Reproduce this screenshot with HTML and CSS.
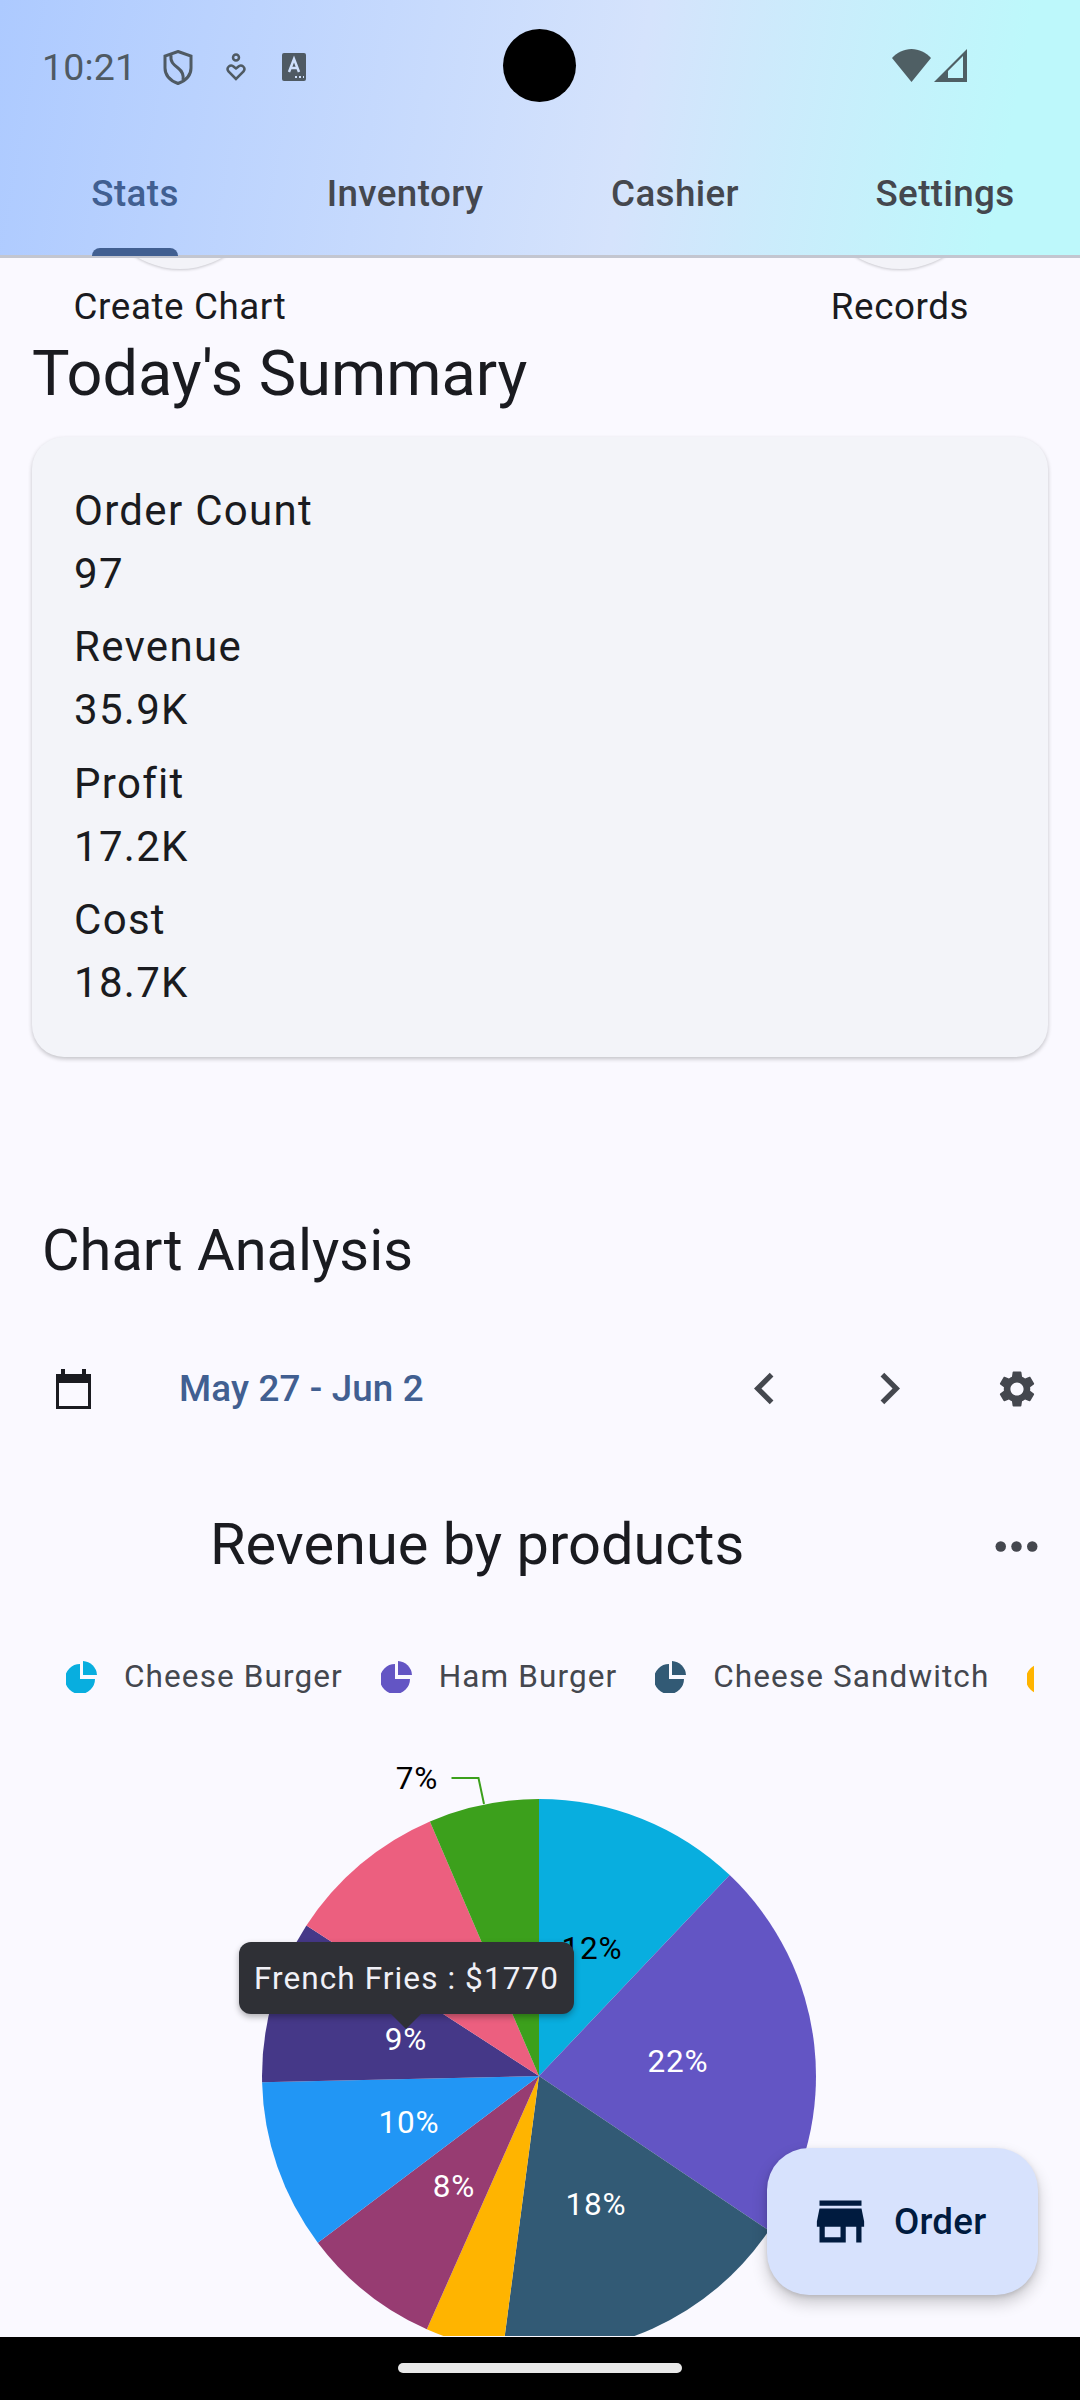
FILE: index.html
```html
<!DOCTYPE html>
<html lang="en">
<head>
  <meta charset="UTF-8">
  <meta name="viewport" content="width=device-width, initial-scale=1.0">
  <title>Stats</title>
  <link rel="stylesheet" href="styles.css">
</head>
<body>
  <header class="appbar">
    <div class="statusbar">
      <div class="status-left">
        <span class="clock">10:21</span>
        <svg class="ic-shield" viewBox="0 0 30 35"><path d="M15 1.500 28 6v12c0 7-5 12.500-13 15.500C7 30.500 2 25 2 18V6z" fill="none" stroke="#4f5a63" stroke-width="3"/><path d="M8 5c-1 7 3 10 7 13s6 6 5 12" fill="none" stroke="#4f5a63" stroke-width="3"/></svg>
        <svg class="ic-care" viewBox="0 0 20 28"><circle cx="10" cy="4.500" r="3" fill="none" stroke="#4f5a63" stroke-width="2.500"/><path d="M10 26 2.500 18.500c-3-4 2.500-8 5-5L10 15.500l2.500-2c2.500-3 8 1 5 5z" fill="none" stroke="#4f5a63" stroke-width="2.500"/></svg>
        <svg class="ic-a" viewBox="0 0 24 28"><rect width="24" height="28" rx="2" fill="#4f5a63"/><path d="M7 19 12 6l5 13M8.500 15h7" fill="none" stroke="#cfe0fc" stroke-width="2.500"/><path d="M13 24h2M17 24h2M21 24h1" stroke="#cfe0fc" stroke-width="2"/></svg>
      </div>
      <div class="camera"></div>
      <div class="status-right">
        <svg class="ic-wifi" viewBox="0 0 39 33"><path d="M19.500 33 0 9C5 3.500 12 0 19.500 0S34 3.500 39 9z" fill="#4f5f64"/></svg>
        <svg class="ic-signal" viewBox="0 0 33 33"><path d="M33 0V33H0zM14 29H29V7L14 22z" fill="#4f5f64" fill-rule="evenodd"/></svg>
      </div>
    </div>
    <nav class="tabs">
      <a class="tab active">Stats</a>
      <a class="tab">Inventory</a>
      <a class="tab">Cashier</a>
      <a class="tab">Settings</a>
    </nav>
  </header>

  <main class="content">
    <div class="shortcuts">
      <div class="shortcut"><div class="shortcut-btn"></div><span>Create Chart</span></div>
      <div class="shortcut"><div class="shortcut-btn"></div><span>Records</span></div>
    </div>

    <h2 class="section-title summary-title">Today's Summary</h2>
    <section class="summary-card">
      <div class="stat"><div>Order Count</div><div>97</div></div>
      <div class="stat"><div>Revenue</div><div>35.9K</div></div>
      <div class="stat"><div>Profit</div><div>17.2K</div></div>
      <div class="stat"><div>Cost</div><div>18.7K</div></div>
    </section>

    <h2 class="section-title analysis-title">Chart Analysis</h2>
    <div class="toolbar">
      <svg class="ic-calendar" viewBox="0 0 35 40"><path fill-rule="evenodd" d="M5 0h4v5h17V0h4v5h5v35H0V5h5zM3 14v23h29V14z" fill="#1a1b20"/></svg>
      <span class="range">May 27 - Jun 2</span>
      <svg class="ic-btn prev" viewBox="0 0 24 24"><path d="M15.410 7.410 14 6l-6 6 6 6 1.410-1.410L10.830 12z"/></svg>
      <svg class="ic-btn next" viewBox="0 0 24 24"><path d="M10 6 8.590 7.410 13.170 12l-4.580 4.590L10 18l6-6z"/></svg>
      <svg class="ic-btn gear" viewBox="0 0 24 24"><path d="M19.140 12.940c.04-.3.06-.61.06-.94 0-.32-.02-.64-.07-.94l2.030-1.580c.18-.14.23-.41.12-.61l-1.920-3.320c-.12-.22-.37-.29-.59-.22l-2.390.96c-.5-.38-1.030-.7-1.620-.94l-.36-2.540c-.04-.24-.24-.41-.48-.41h-3.840c-.24 0-.43.17-.47.41l-.36 2.540c-.59.24-1.130.57-1.620.94l-2.390-.96c-.22-.08-.47 0-.59.22L2.740 8.870c-.12.21-.08.47.12.61l2.030 1.580c-.05.3-.09.63-.09.94s.02.64.07.94l-2.030 1.580c-.18.14-.23.41-.12.61l1.920 3.320c.12.22.37.29.59.22l2.390-.96c.5.38 1.030.7 1.620.94l.36 2.540c.05.24.24.41.48.41h3.840c.24 0 .44-.17.47-.41l.36-2.540c.59-.24 1.130-.56 1.620-.94l2.390.96c.22.08.47 0 .59-.22l1.920-3.320c.12-.22.07-.47-.12-.61l-2.010-1.580zM12 15.600c-1.980 0-3.600-1.620-3.600-3.600s1.620-3.600 3.600-3.600 3.600 1.620 3.600 3.600-1.620 3.600-3.600 3.600z"/></svg>
    </div>

    <div class="chart-head">
      <h3 class="chart-title">Revenue by products</h3>
      <svg class="ic-btn more" viewBox="0 0 24 24"><circle cx="6" cy="12" r="2"/><circle cx="12" cy="12" r="2"/><circle cx="18" cy="12" r="2"/></svg>
    </div>

    <div class="legend">
      <div class="legend-item"><svg class="pie-ic" viewBox="0 0 31 32" fill="#08aedf"><path d="M14 3V18H29A15 15 0 1 1 14 3z"/><path d="M17 0A15 15 0 0 1 31 14H17z"/></svg><span>Cheese Burger</span></div>
      <div class="legend-item"><svg class="pie-ic" viewBox="0 0 31 32" fill="#6355c4"><path d="M14 3V18H29A15 15 0 1 1 14 3z"/><path d="M17 0A15 15 0 0 1 31 14H17z"/></svg><span>Ham Burger</span></div>
      <div class="legend-item"><svg class="pie-ic" viewBox="0 0 31 32" fill="#325a75"><path d="M14 3V18H29A15 15 0 1 1 14 3z"/><path d="M17 0A15 15 0 0 1 31 14H17z"/></svg><span>Cheese Sandwitch</span></div>
      <div class="legend-item"><svg class="pie-ic" viewBox="0 0 31 32" fill="#ffb400"><path d="M14 3V18H29A15 15 0 1 1 14 3z"/><path d="M17 0A15 15 0 0 1 31 14H17z"/></svg></div>
    </div>

    <div class="chart">
      <svg class="pie" viewBox="0 0 1080 597">
        <path d="M539 337V60A277 277 0 0 1 729.700 136.100Z" fill="#08aedf"/>
        <path d="M539 337 729.700 136.100A277 277 0 0 1 768.900 491.500Z" fill="#6355c4"/>
        <path d="M539 337 768.900 491.500A277 277 0 0 1 502.800 611.600Z" fill="#325a75"/>
        <path d="M539 337 502.800 611.600A277 277 0 0 1 426.800 590.300Z" fill="#ffb400"/>
        <path d="M539 337 426.800 590.300A277 277 0 0 1 317.800 503.700Z" fill="#973c72"/>
        <path d="M539 337 317.800 503.700A277 277 0 0 1 262.100 343.300Z" fill="#2196f5"/>
        <path d="M539 337 262.100 343.300A277 277 0 0 1 306.400 186.500Z" fill="#453888"/>
        <path d="M539 337 306.400 186.500A277 277 0 0 1 429.900 82.400Z" fill="#ec5f7f"/>
        <path d="M539 337 429.900 82.400A277 277 0 0 1 539 60Z" fill="#3ca01c"/>
        <path d="M451.500 39H478.500L484 65" fill="none" stroke="#3ca01c" stroke-width="2"/>
        <text class="lbl" x="417" y="49.500" fill="#000">7%</text>
        <text class="lbl" x="592" y="219.500" fill="#000">12%</text>
        <text class="lbl" x="678" y="333" fill="#fff">22%</text>
        <text class="lbl" x="596" y="475.500" fill="#fff">18%</text>
        <text class="lbl" x="454" y="457.500" fill="#fff">8%</text>
        <text class="lbl" x="409" y="393.500" fill="#fff">10%</text>
        <text class="lbl" x="406" y="310.500" fill="#fff">9%</text>
      </svg>
      <div class="tooltip">French Fries : $1770</div>
    </div>

    <button class="fab">
      <svg class="ic-store" viewBox="0 0 24 24"><path d="M20 4H4v2h16V4zm1 10v-2l-1-5H4l-1 5v2h1v6h10v-6h4v6h2v-6h1zm-9 4H6v-4h6v4z"/></svg>
      <span>Order</span>
    </button>
  </main>

  <footer class="navbar"><div class="home-pill"></div></footer>
</body>
</html>
```

FILE: styles.css
```css
* { box-sizing: border-box; margin: 0; padding: 0; }
html, body { width: 1080px; height: 2400px; overflow: hidden; }
body {
  background: #000;
  color: #1a1b20;
  font-family: Roboto, 'Noto Sans', sans-serif;
  display: flex; flex-direction: column;
}

/* top bar */
.appbar {
  height: 258px;
  background: linear-gradient(100deg, #adcaff 0%, #d5e3fc 58%, #bdf8fb 92%);
  border-bottom: 3px solid #c3c6d0;
  position: relative;
  z-index: 2;
  flex: none;
}
.statusbar { height: 132px; position: relative; display: flex; justify-content: space-between; padding: 49px 113px 0 42px; }
.status-left { display: flex; align-items: center; height: 36px; }
.clock { font-size: 37.5px; color: #4f5a63; width: 121px; letter-spacing: 0.2px; }
.ic-shield { width: 30px; height: 35px; margin-right: 33px; }
.ic-care { width: 20px; height: 28px; margin-right: 36px; }
.ic-a { width: 24px; height: 28px; }
.camera { position: absolute; left: 503px; top: 29px; width: 73px; height: 73px; border-radius: 50%; background: #000; }
.status-right { display: flex; gap: 3px; height: 33px; }
.ic-wifi { width: 39px; height: 33px; }
.ic-signal { width: 33px; height: 33px; }

.tabs { display: grid; grid-template-columns: repeat(4, 270px); height: 123px; }
.tab {
  font-size: 36.75px; font-weight: 500; color: #44474e; letter-spacing: 0.4px;
  text-align: center; line-height: 124px; position: relative;
}
.tab.active { color: #415f91; }
.tab.active::after {
  content: ''; position: absolute; left: 92px; width: 86px; bottom: 0; height: 8px;
  background: #415f91; border-radius: 8px 8px 0 0;
}

/* scrolled content */
.content { flex: 1; background: #faf9ff; overflow: hidden; position: relative; }
.shortcuts { display: grid; grid-template-columns: repeat(3, 360px); margin-top: -157px; }
.shortcut { display: flex; flex-direction: column; align-items: center; font-size: 36.75px; line-height: 48px; letter-spacing: 0.6px; }
.shortcut:last-child { grid-column: 3; }
.shortcut-btn { width: 168px; height: 168px; border-radius: 50%; background: #f3f3f8; box-shadow: 0 1px 3px rgba(0,0,0,.2); margin-bottom: 14px; }

.section-title { font-size: 57.75px; font-weight: 400; line-height: 76px; }
.summary-title { font-size: 63px; padding-left: 32px; margin: 5px 0 25px; }
.summary-card {
  margin: 0 32px; height: 620px; padding: 41.5px 42px 0 42px;
  background: #f3f4f9; border-radius: 32px;
  box-shadow: 0 2px 4px rgba(0,0,0,.22);
}
.stat { font-size: 42px; line-height: 63px; letter-spacing: 1.3px; margin-bottom: 10.5px; }

.analysis-title { padding-left: 42px; margin-top: 154.5px; }
.toolbar { display: flex; align-items: center; height: 63px; margin-top: 69.5px; padding-left: 56px; }
.ic-calendar { width: 35px; height: 40px; margin-right: 88px; }
.range { font-size: 36.75px; font-weight: 500; color: #415f91; width: 554px; letter-spacing: 0.15px; }
.ic-btn { width: 63px; height: 63px; fill: #44474e; flex: none; }
.next { margin-left: 62px; }
.gear { width: 44px; height: 44px; margin-left: 74px; }

.chart-head { display: flex; align-items: center; height: 76px; margin-top: 86px; padding-left: 210px; }
.chart-title { font-size: 57.75px; font-weight: 400; width: 775px; line-height: 76px; }
.more { margin-top: 4px; }

.legend {
  display: flex; align-items: center; gap: 38px; height: 40px;
  margin: 74.5px 46px 0 66px; overflow: hidden; white-space: nowrap;
}
.legend-item { display: flex; align-items: center; gap: 27px; font-size: 31.5px; letter-spacing: 1.1px; color: #44474e; flex: none; }
.pie-ic { width: 31px; height: 32px; flex: none; }

.chart { position: relative; margin-top: 42.5px; height: 597px; }
.pie { display: block; width: 1080px; height: 597px; overflow: hidden; }
.lbl { font-size: 31.5px; letter-spacing: 0.8px; text-anchor: middle; }
.tooltip {
  position: absolute; left: 239px; top: 203px; width: 335px; height: 72px;
  background: #2f3036; color: #f1f0f7; border-radius: 12px;
  font-size: 31.5px; letter-spacing: 1.1px; line-height: 74px; text-align: center;
  box-shadow: 0 3px 6px rgba(0,0,0,.3);
}
.tooltip::after {
  content: ''; position: absolute; left: 152px; top: 72px;
  border: 15px solid transparent; border-top-color: #2f3036; border-bottom: 0;
}

.fab {
  position: absolute; left: 767px; top: 1890px; width: 271px; height: 147px;
  display: flex; align-items: center; gap: 22px; padding-left: 42px;
  background: #d7e2fd; border: 0; border-radius: 42px;
  color: #001b3f; font-family: inherit; font-size: 36.75px; font-weight: 500; letter-spacing: 0.2px;
  box-shadow: 0 8px 16px rgba(0,0,0,.2), 0 2px 5px rgba(0,0,0,.12);
}
.ic-store { width: 63px; height: 63px; fill: #001b3f; }

.navbar { height: 63px; background: #000; display: flex; justify-content: center; padding-top: 26px; flex: none; }
.home-pill { width: 284px; height: 10px; border-radius: 5px; background: #e8e8e8; }
```
